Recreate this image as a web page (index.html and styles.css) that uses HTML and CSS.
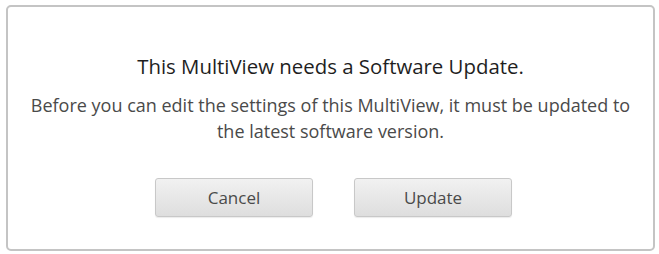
FILE: index.html
```html
<!DOCTYPE html>
<html>
<head>
<meta charset="utf-8">
<link rel="stylesheet" href="styles.css">
</head>
<body>
<div class="dialog">
  <h1 class="title">This MultiView needs a Software Update.</h1>
  <p class="message">Before you can edit the settings of this MultiView, it must be updated to the latest software version.</p>
  <div class="actions">
    <button class="btn">Cancel</button>
    <button class="btn">Update</button>
  </div>
</div>
</body>
</html>
```

FILE: styles.css
```css
html, body {
  margin: 0;
  padding: 0;
  background: #ffffff;
}
body {
  padding: 5px 5px 3px 6px;
  font-family: "Open Sans", "Liberation Sans", sans-serif;
}
.dialog {
  box-sizing: border-box;
  width: 649px;
  height: 246px;
  border: 2px solid #c4c4c4;
  border-radius: 5px;
  background: #fff;
  display: flex;
  flex-direction: column;
  align-items: center;
  padding-top: 46px;
}
.title {
  margin: 0;
  font-size: 20.4px;
  font-weight: 400;
  color: #1e1e1e;
  line-height: 26px;
}
.message {
  margin: 13px 0 0;
  width: 610px;
  text-align: center;
  font-size: 18px;
  line-height: 26px;
  color: #4a4a4a;
}
.actions {
  margin-top: 34px;
  margin-left: 6px;
  display: flex;
  gap: 41px;
}
.btn {
  width: 158px;
  height: 39px;
  border: 1px solid #c8c8c8;
  border-radius: 3px;
  background: linear-gradient(#f1f1f1, #dedede);
  font-family: "Open Sans", "Liberation Sans", sans-serif;
  font-size: 17px;
  color: #4a4a4a;
  box-shadow: 0 1px 1px rgba(0,0,0,0.08);
}
```
